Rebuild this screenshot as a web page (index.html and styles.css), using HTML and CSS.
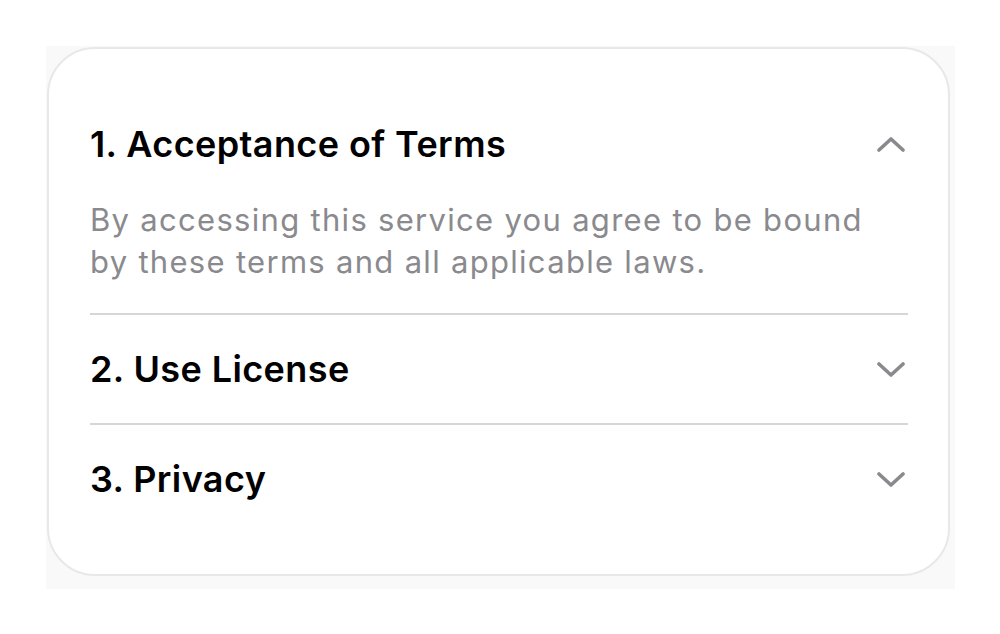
FILE: index.html
```html
<!DOCTYPE html>
<html lang="en">
<head>
<meta charset="utf-8">
<title>Terms</title>
<link rel="stylesheet" href="styles.css">
</head>
<body>
<div class="frame">
  <section class="card">
    <div class="item open">
      <div class="head">
        <h2 class="title">1. Acceptance of Terms</h2>
        <svg class="chev" viewBox="0 0 28 15" width="28" height="15"><path d="M2 13 L14 2 L26 13"/></svg>
      </div>
      <p class="body">By accessing this service you agree to be bound by these terms and all applicable laws.</p>
    </div>
    <div class="item">
      <div class="head">
        <h2 class="title">2. Use License</h2>
        <svg class="chev" viewBox="0 0 28 15" width="28" height="15"><path d="M2 2 L14 13 L26 2"/></svg>
      </div>
    </div>
    <div class="item">
      <div class="head">
        <h2 class="title">3. Privacy</h2>
        <svg class="chev" viewBox="0 0 28 15" width="28" height="15"><path d="M2 2 L14 13 L26 2"/></svg>
      </div>
    </div>
  </section>
</div>
</body>
</html>
```

FILE: styles.css
```css
* { box-sizing: border-box; }
html, body { margin: 0; padding: 0; background: #ffffff; }
body {
  width: 1000px;
  height: 634px;
  font-family: Inter, "Noto Sans", "Liberation Sans", sans-serif;
  padding: 46px 45px 45px 46px;
}
.frame {
  width: 909px;
  height: 543px;
  background: #f9f9f9;
  padding: 1px 5px 13px 1px;
}
.card {
  width: 903px;
  height: 529px;
  background: #ffffff;
  border: 2px solid #e8e8e8;
  border-radius: 48px;
  padding: 40px 40px 0 41px;
}
.item + .item { border-top: 2px solid #d6d6d8; }
.head {
  display: flex;
  align-items: center;
  justify-content: space-between;
  height: 108px;
}
.item:first-child .head { height: 110px; }
.title {
  margin: 0;
  font-size: 36px;
  font-weight: 600;
  color: #000000;
  letter-spacing: 0.4px;
}
.chev {
  margin-right: 3px;
  fill: none;
  stroke: #8a8a8e;
  stroke-width: 3.6;
  stroke-linecap: round;
  stroke-linejoin: round;
}
.body {
  margin: 0;
  padding: 0 30px 30px 0;
  font-size: 31px;
  line-height: 42px;
  letter-spacing: 1.3px;
  color: #8a8a8e;
  font-weight: 400;
}
```
